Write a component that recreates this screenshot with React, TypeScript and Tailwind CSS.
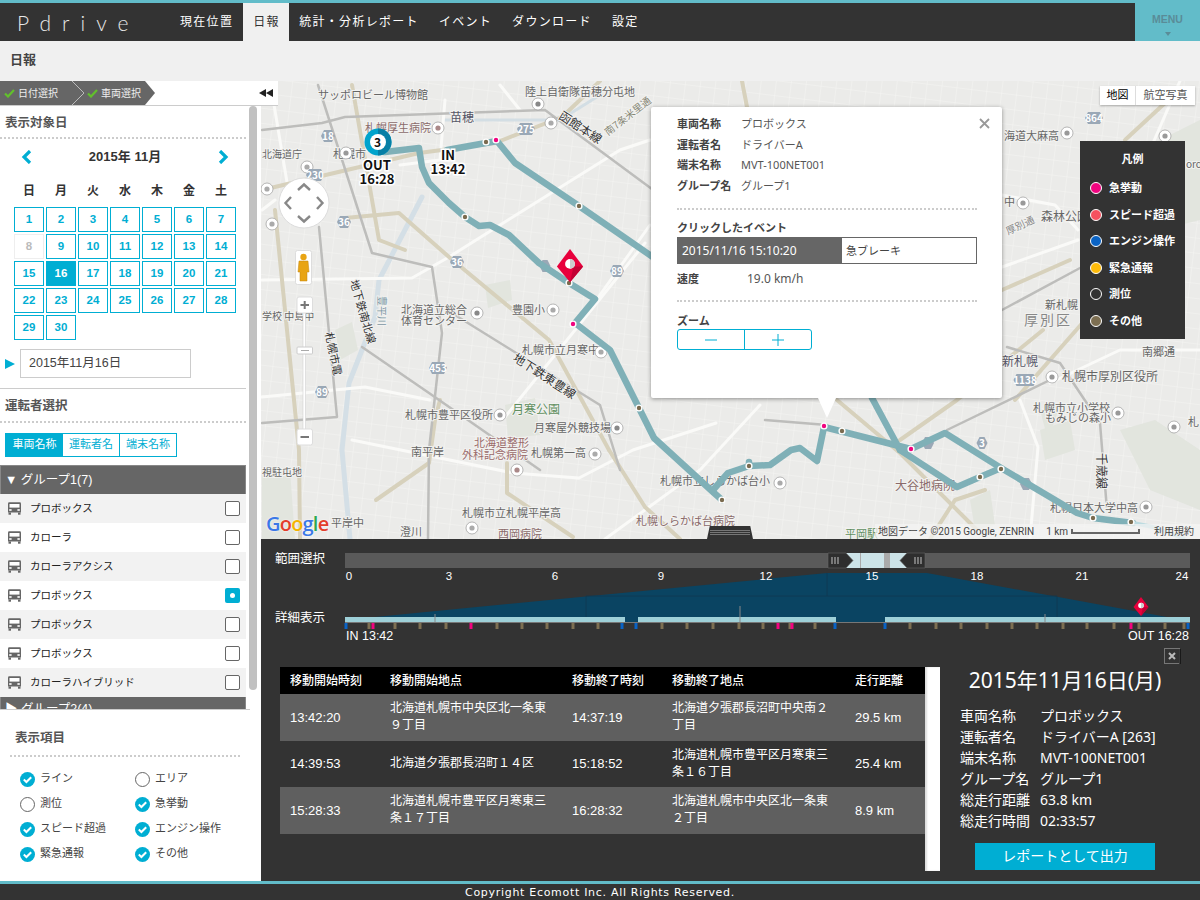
import React from "react";

const days = Array.from({ length: 30 }, (_, i) => i + 1);
const vehicles = ["プロボックス", "カローラ", "カローラアクシス", "プロボックス", "プロボックス", "プロボックス", "カローラハイブリッド"];

const Bus = () => (
  <svg width="15" height="13" viewBox="0 0 15 13" className="shrink-0">
    <path d="M1 1.5 Q1 .3 2.3 .3 H12.7 Q14 .3 14 1.5 V10.5 H1 Z" fill="#666" />
    <rect x="2.5" y="2" width="10" height="3.6" fill="#fff" />
    <rect x="2.2" y="7.2" width="2.4" height="1.6" fill="#fff" />
    <rect x="10.4" y="7.2" width="2.4" height="1.6" fill="#fff" />
    <rect x="1.5" y="10.5" width="2.5" height="2.2" fill="#666" />
    <rect x="11" y="10.5" width="2.5" height="2.2" fill="#666" />
  </svg>
);

const Tick = () => (
  <svg width="11" height="9" viewBox="0 0 11 9" className="shrink-0">
    <path d="M1 4.5 L4 7.5 L10 1" stroke="#62c02c" strokeWidth="2.2" fill="none" />
  </svg>
);

const Check = ({ on, label }: { on: boolean; label: string }) => (
  <div className="flex items-center gap-[5px] h-[25px]">
    {on ? (
      <svg width="15" height="15" viewBox="0 0 15 15" className="shrink-0">
        <circle cx="7.5" cy="7.5" r="7.5" fill="#00aed3" />
        <path d="M3.8 7.6 L6.4 10 L11.2 5.2" stroke="#fff" strokeWidth="2" fill="none" />
      </svg>
    ) : (
      <span className="w-[15px] h-[15px] rounded-full border border-[#666] bg-white shrink-0" />
    )}
    <span className="text-[11px] text-[#444] -mt-[2px]">{label}</span>
  </div>
);

const L = ({ x, y, t, c = "#666", s = 11, r, h = true, ls }: { x: number; y: number; t: string; c?: string; s?: number; r?: number; h?: boolean; ls?: number }) => (
  <text
    x={x}
    y={y}
    fontSize={s}
    fill={c}
    letterSpacing={ls}
    stroke={h ? "#f2f2f0" : "none"}
    strokeWidth={h ? 2 : 0}
    paintOrder="stroke"
    transform={r ? `rotate(${r} ${x} ${y})` : undefined}
  >
    {t}
  </text>
);

const Shield = ({ x, y, t, w = 18 }: { x: number; y: number; t: string; w?: number }) => (
  <g>
    <path d={`M${x - w / 2} ${y - 6} H${x + w / 2} L${x + w / 2 + 3} ${y} L${x + w / 2} ${y + 6} H${x - w / 2} L${x - w / 2 - 3} ${y} Z`} fill="#9aa8b6" />
    <text x={x} y={y + 3.5} fontSize="10" fontWeight="700" fill="#fff" textAnchor="middle">{t}</text>
  </g>
);

const Poi = ({ x, y, c = "#777" }: { x: number; y: number; c?: string }) => (
  <g>
    <circle cx={x} cy={y} r="6" fill="#fff" stroke="#999" strokeWidth=".7" />
    <circle cx={x} cy={y} r="2.6" fill={c} />
  </g>
);

const Dot = ({ x, y, pink }: { x: number; y: number; pink?: boolean }) => (
  <g>
    <circle cx={x} cy={y} r="3.6" fill="#fff" />
    <circle cx={x} cy={y} r="2.2" fill={pink ? "#f0047f" : "#7a6b4f"} />
  </g>
);

const Outlined = ({ x, y, t }: { x: number; y: number; t: string }) => (
  <text x={x} y={y} fontSize="13" fontWeight="700" fill="#111" stroke="#fff" strokeWidth="3" paintOrder="stroke" textAnchor="middle">{t}</text>
);

const Pin = ({ x, y, k = 1 }: { x: number; y: number; k?: number }) => (
  <g transform={`translate(${x} ${y}) scale(${k})`}>
    <path d="M0 0 L7.5 10 L0 19 L-7.5 10 Z" fill="#e8003c" />
    <path d="M2 10 L7.5 10 L0 19 Z" fill="#c20033" />
    <circle cx="0" cy="8.500" r="2.800" fill="#fff" />
    <path d="M0 5.700 A2.800 2.800 0 0 1 0 11.300 Z" fill="#ccc" />
  </g>
);

const MapArt = () => (
  <svg viewBox="261 81 939 458" width="939" height="458" className="block font-['Noto_Sans_CJK_JP',sans-serif]">
    <defs>
      <pattern id="streets" width="15" height="15" patternUnits="userSpaceOnUse" patternTransform="rotate(7)">
        <path d="M0 0 H15 M0 0 V15" stroke="#f7f7f5" strokeWidth=".9" fill="none" />
      </pattern>
    </defs>
    <rect x="261" y="81" width="939" height="458" fill="#ebebe9" />
    <rect x="261" y="81" width="939" height="458" fill="url(#streets)" />
    <g fill="#e2e5de">
      <path d="M335 330 L352 322 L358 350 L340 360 Z" />
      <path d="M262 470 L290 470 L295 539 L262 539 Z" />
      <path d="M1040 430 L1070 420 L1075 450 L1045 460 Z" />
      <path d="M1040 410 L1060 405 L1048 440 Z" />
      <path d="M505 405 L535 398 L540 435 L508 438 Z" />
      <path d="M485 285 L510 280 L512 300 L488 308 Z" />
      <path d="M1120 430 L1155 420 L1200 450 L1200 510 L1150 490 Z" />
      <path d="M970 500 L990 490 L995 525 L975 530 Z" />
      <path d="M1100 170 L1200 120 L1200 220 L1120 240 Z" />
    </g>
    <g fill="none" strokeLinecap="round" strokeLinejoin="round">
      <path d="M422 197 L379 280 L375 317 L349 383 L342 450 L350 539" stroke="#d4dfe6" strokeWidth="5" />
      <path d="M445 120 L560 120 L600 95" stroke="#d3dee4" strokeWidth="3" />
      <g stroke="#fafaf8" strokeWidth="3">
        <path d="M262 280 L412 278 L449 257" />
        <path d="M505 417 L645 243" />
        <path d="M582 320 L650 225" />
        <path d="M262 397 L365 387 L430 400" />
        <path d="M352 440 L513 473 L579 478 L633 450 L716 423" />
        <path d="M449 257 L620 150 L650 140" />
        <path d="M270 81 L290 200" />
        <path d="M1020 400 L1038 447 L1030 539" />
        <path d="M1050 383 L1120 350 L1200 350" />
        <path d="M1002 267 L1078 240" />
        <path d="M1002 195 L1055 205 L1078 230" />
        <path d="M1180 81 L1150 150" />
        <path d="M500 85 L520 110" />
        <path d="M400 165 L440 160 L445 100" />
        <path d="M262 210 L275 200" />
        <path d="M605 539 L700 470 L760 405" />
      </g>
      <g stroke="#d7d1bc" strokeWidth="4">
        <path d="M352 85 L379 240 L405 250" />
        <path d="M345 218 L399 213 L449 257 L549 340 L609 450" />
        <path d="M262 190 L419 153 L495 143 L562 117 L600 81" />
        <path d="M275 210 L299 450 L300 539" />
        <path d="M376 500 L429 463 L435 420 L440 400" />
        <path d="M507 463 L507 493 L573 537" />
        <path d="M609 450 L645 507 L680 539" />
        <path d="M837 400 L900 453 L977 530" />
        <path d="M900 440 L957 400 L1043 330" />
        <path d="M742 81 L747 107" />
        <path d="M1165 103 L1125 140" />
        <path d="M1002 290 L1070 260" />
        <path d="M1015 400 L1085 320" />
        <path d="M930 539 L955 500 L985 490" />
      </g>
      <g stroke="#bdbdbb" strokeWidth="2.5">
        <path d="M262 130 L322 123 L345 117 L545 110 L660 195 L700 215" />
        <path d="M318 85 L372 253 L432 267 L442 333 L429 450 L428 539" />
        <path d="M319 227 L337 417 L262 423" />
        <path d="M362 347 L429 393 L540 470" />
        <path d="M947 430 L1050 380" />
        <path d="M1007 347 L1060 363 L1100 423 L1107 510" />
        <path d="M1002 310 L1080 268" />
        <path d="M455 315 L600 405 L620 470" />
        <path d="M765 420 L827 425" />
      </g>
    </g>

    <L x={318} y={99} t="サッポロビール博物館" />
    <L x={525} y={96} t="陸上自衛隊苗穂分屯地" />
    <L x={450} y={122} t="苗穂" s={12} c="#556" />
    <L x={365} y={132} t="札幌厚生病院" c="#8a6a6a" />
    <L x={558} y={118} t="函館本線" c="#333" s={12} r={33} />
    <L x={608} y={136} t="南7条米里通" c="#887" s={10} r={-38} />
    <L x={262} y={158} t="北海道庁" s={10} />
    <L x={333} y={158} t="札幌市" />
    <L x={262} y={320} t="学校 中島中" s={10} />
    <L x={350} y={281} t="地下鉄南北線" c="#333" s={11} r={74} />
    <L x={325} y={333} t="札幌市電" c="#333" s={11} r={78} />
    <L x={378} y={296} t="豊平川" c="#7c96a4" s={10} r={90} />
    <L x={401} y={314} t="北海道立総合" />
    <L x={401} y={325} t="体育センター" />
    <L x={512} y={314} t="豊園小" />
    <L x={522} y={354} t="札幌市立月寒中" />
    <L x={512} y={360} t="地下鉄東豊線" c="#333" s={12} r={33} />
    <L x={512} y={414} t="月寒公園" c="#5f8f5f" s={12} />
    <L x={405} y={419} t="札幌市豊平区役所" />
    <L x={534} y={432} t="月寒屋外競技場" />
    <L x={474} y={447} t="北海道整形" c="#9a6a6a" />
    <L x={462} y={459} t="外科記念病院" c="#9a6a6a" />
    <L x={531} y={457} t="札幌第一高" />
    <L x={411} y={456} t="南平岸" />
    <L x={660} y={485} t="札幌市立しらかば台小" />
    <L x={462} y={517} t="札幌市立札幌平岸高" />
    <L x={636} y={525} t="札幌しらかば台病院" c="#8a6a6a" />
    <L x={331} y={527} t="平岸中" />
    <L x={400} y={536} t="澄川" />
    <L x={498} y={538} t="西岡病院" c="#8a6a6a" />
    <L x={262} y={476} t="視駐屯地" s={10} />
    <L x={895} y={490} t="大谷地病院" c="#8a6a6a" s={12} />
    <L x={1050} y={512} t="札幌日本大学中高" />
    <L x={1002} y={366} t="新札幌" c="#556" s={12} />
    <L x={1062} y={381} t="札幌市厚別区役所" s={12} />
    <L x={1033} y={412} t="札幌市立小学校" />
    <L x={1045} y={422} t="もみじの森小" />
    <L x={1142} y={356} t="南郷通" />
    <L x={1097} y={453} t="千歳線" c="#333" s={12} r={90} />
    <L x={1024} y={325} t="厚別区" c="#888" s={14} ls={2} />
    <L x={1045} y={309} t="新札幌" />
    <L x={1041} y={221} t="森林公園" s={12} />
    <L x={1008} y={235} t="厚別通" s={10} c="#888" r={-25} />
    <L x={1004} y={140} t="海道大麻高" />
    <L x={1004} y={206} t="中" />
    <L x={1186} y={168} t="oro" s={10} />
    <L x={1188} y={426} t="札" />
    <L x={845} y={538} t="平岡駅" c="#5f8f5f" />
    <Poi x={1067} y={133} c="#999" />
    <Poi x={1165} y={136} c="#999" />
    <Poi x={1023} y={203} c="#999" />
    <Poi x={1052} y={377} c="#999" />
    <Poi x={1118} y={413} c="#999" />
    <Poi x={1174} y={427} c="#999" />
    <Poi x={1146} y={507} c="#999" />
    <Poi x={346} y={153} c="#999" />
    <Poi x={477} y={313} c="#888" />
    <Poi x={553} y={310} c="#aaa" />
    <Poi x={601} y={352} c="#aaa" />
    <Poi x={500} y={415} c="#999" />
    <Poi x={617} y={428} c="#888" />
    <Poi x={595} y={454} c="#aaa" />
    <Poi x={517} y={470} c="#a88" />
    <Poi x={780} y={483} c="#aaa" />
    <Poi x={472} y={528} c="#aaa" />
    <Poi x={551} y={123} c="#aaa" />
    <Poi x={438} y={128} c="#a88" />
    <Poi x={538} y={104} c="#888" />
    <Poi x={307} y={167} c="#aaa" />
    <Poi x={267} y={189} c="#aaa" />
    <Poi x={272} y={224} c="#aaa" />
    <Shield x={328} y={136} t="18" w={8} />
    <Shield x={315} y={175} t="230" w={12} />
    <Shield x={344} y={222} t="36" w={8} />
    <Shield x={457} y={262} t="36" w={8} />
    <Shield x={526} y={129} t="275" w={12} />
    <Shield x={617} y={271} t="89" w={8} />
    <Shield x={438} y={368} t="453" w={12} />
    <Shield x={322} y={392} t="89" w={8} />
    <Shield x={1094} y={118} t="864" w={12} />
    <Shield x={1025} y={380} t="1138" w={17} />
    <Shield x={982} y={443} t="3" w={5} />
    <Shield x={928} y={443} t="" w={6} />
    <Shield x={1026} y={484} t="" w={6} />
    <Shield x={545} y={266} t="" w={5} />

    <g fill="none" stroke="#7fb0b7" strokeWidth="6.500" strokeLinejoin="round" strokeLinecap="round">
      <path d="M385 152 L419 148 L422 167 L429 183 L449 203 L465 217 L479 226 L490 225 L509 235 L539 263 L569 283 L595 299 L575 323 L610 350 L639 408 L654 438 L713 492 L722 500" />
      <path d="M447 150 L497 141 L515 163 L579 206 L660 262" />
      <path d="M713 490 L728 473 L749 466 L749 462 M749 466 L770 465 L791 450 L800 448 L817 461 L824 427 L911 449 L945 433 L1001 468 L1077 513 L1093 518 L1133 523" />
      <path d="M872 398 L900 450 L957 487 L980 477 L1001 468" />
      <path d="M911 449 L900 450" />
    </g>
    <path d="M1133 523 L1153 527 L1185 539" fill="none" stroke="#bcdbe0" strokeWidth="4" />
    <Dot x={486} y={142} />
    <Dot x={496} y={140} pink />
    <Dot x={579} y={206} />
    <Dot x={465} y={217} />
    <Dot x={569} y={283} />
    <Dot x={573} y={324} pink />
    <Dot x={639} y={408} />
    <Dot x={722} y={500} />
    <Dot x={749} y={466} />
    <Dot x={824} y={426} pink />
    <Dot x={842} y={431} />
    <Dot x={911} y={449} pink />
    <Dot x={980} y={477} />
    <Dot x={1001} y={469} />
    <Dot x={1093} y={518} />
    <Dot x={1131} y={522} />
    <Pin x={570} y={249} k={1.750} />

    <circle cx="378" cy="142" r="13.5" fill="#00a3cc" />
    <path d="M378 128.5 A13.5 13.5 0 0 1 378 155.5 Z" fill="#067fa6" />
    <circle cx="378" cy="142" r="8" fill="#fff" />
    <text x="377.500" y="146.500" fontSize="12" fontWeight="700" fill="#111" textAnchor="middle">3</text>
    <Outlined x={377} y={170} t="OUT" />
    <Outlined x={377} y={184} t="16:28" />
    <Outlined x={448} y={160} t="IN" />
    <Outlined x={448} y={174} t="13:42" />

    <circle cx="304" cy="203" r="25" fill="#fff" stroke="#ddd" />
    <g fill="none" stroke="#888" strokeWidth="2.4">
      <path d="M298 190 L304 184.500 L310 190" />
      <path d="M298 216 L304 221.500 L310 216" />
      <path d="M291 197 L285.500 203 L291 209" />
      <path d="M317 197 L322.500 203 L317 209" />
    </g>
    <rect x="295.500" y="250.500" width="16" height="34" rx="2" fill="#fff" stroke="#ddd" />
    <circle cx="303.500" cy="257" r="3.200" fill="#e8a414" />
    <path d="M299 261 H308 L309 272 H307 V281 H300 V272 H298 Z" fill="#e8a414" stroke="#c08610" strokeWidth=".5" />
    <rect x="303" y="312" width="2.500" height="118" fill="#fff" stroke="#ccc" strokeWidth=".5" />
    <rect x="297" y="297" width="15.500" height="16" rx="2" fill="#fff" stroke="#ddd" />
    <path d="M300.500 305 H309 M304.700 301 V309" stroke="#777" strokeWidth="2" />
    <rect x="297" y="347" width="15.500" height="7" rx="1" fill="#fff" stroke="#ccc" />
    <path d="M301 350.500 H309" stroke="#aaa" />
    <rect x="297" y="429" width="15.500" height="16" rx="2" fill="#fff" stroke="#ddd" />
    <path d="M300.500 437 H309" stroke="#777" strokeWidth="2" />
  </svg>
);

const brown = [369, 395, 420, 446, 497, 522, 547, 573, 598, 662, 687, 713, 739, 763, 790, 815, 910, 936, 961, 987, 1012, 1037, 1063, 1087, 1114, 1139, 1165, 1184];
const pink = [373, 471, 778, 792, 1131];
const blue = [346, 622, 636, 835, 885, 1188];
const hours: [number, string][] = [[349, "0"], [449, "3"], [555, "6"], [661, "9"], [766, "12"], [872, "15"], [977, "18"], [1082, "21"], [1182, "24"]];

const Timeline = () => (
  <svg viewBox="261 539 939 128" width="939" height="128" className="block font-['Liberation_Sans','Noto_Sans_CJK_JP',sans-serif]">
    <text x="275" y="563" fontSize="12.500" fill="#fff">範囲選択</text>
    <text x="275" y="622" fontSize="12.500" fill="#fff">詳細表示</text>
    <rect x="345" y="553" width="845" height="15" fill="#5a5a5a" />
    <path d="M375 617 L827 573 H927 L1167 617 V622 H375 Z" fill="#0a4462" />
    <rect x="846" y="553" width="72" height="15" fill="#cce3e8" />
    <rect x="860" y="553" width="1" height="15" fill="#aaa" />
    <rect x="884" y="553" width="6" height="15" fill="#aaa" />
    <path d="M828 553 H846 L853 560.500 L846 568 H828 Z" fill="#2e2e2e" stroke="#666" strokeWidth=".6" />
    <path d="M832 557 V564 M835 557 V564 M838 557 V564" stroke="#999" strokeWidth="1.400" />
    <path d="M925 553 H907 L900 560.500 L907 568 H925 Z" fill="#2e2e2e" stroke="#666" strokeWidth=".6" />
    <path d="M915 557 V564 M918 557 V564 M921 557 V564" stroke="#999" strokeWidth="1.400" />
    {hours.map(([x, t]) => (
      <text key={t} x={x} y={580} fontSize="11.500" fill="#fff" textAnchor="middle">{t}</text>
    ))}
    <path d="M586 596 H1057 M827 573 V596 M586 596 V617 M1057 596 V617" stroke="#0f3850" fill="none" strokeWidth=".8" />
    <rect x="345" y="617" width="280" height="5" fill="#9ed0d8" />
    <rect x="638" y="617" width="198" height="5" fill="#9ed0d8" />
    <rect x="885" y="617" width="305" height="5" fill="#9ed0d8" />
    <rect x="345" y="622" width="845" height="1" fill="#777" />
    <path d="M435 614 V622 M740 606 V622 M1045 614 V622" stroke="#888" />
    {brown.map((x) => <rect key={x} x={x - 1.5} y={623} width="3" height="6" fill="#7d6f52" />)}
    {pink.map((x) => <rect key={x} x={x - 1.5} y={623} width="3" height="6" fill="#f0047f" />)}
    {blue.map((x) => <rect key={x} x={x - 1.5} y={623} width="3" height="6" fill="#0a63c4" />)}
    <Pin x={1141} y={597} />
    <text x="346" y="640" fontSize="12.500" fill="#fff">IN 13:42</text>
    <text x="1189" y="640" fontSize="12.500" fill="#fff" textAnchor="end">OUT 16:28</text>
    <rect x="1164.500" y="648.500" width="15" height="15" fill="#333" stroke="#777" />
    <path d="M1180 649 V664" stroke="#000" />
    <path d="M1169 653 L1175 659 M1175 653 L1169 659" stroke="#bbb" strokeWidth="2" />
  </svg>
);

const rows = [
  ["13:42:20", <>北海道札幌市中央区北一条東<br />９丁目</>, "14:37:19", <>北海道夕張郡長沼町中央南２<br />丁目</>, "29.5 km"],
  ["14:39:53", <>北海道夕張郡長沼町１４区</>, "15:18:52", <>北海道札幌市豊平区月寒東三<br />条１６丁目</>, "25.4 km"],
  ["15:28:33", <>北海道札幌市豊平区月寒東三<br />条１７丁目</>, "16:28:32", <>北海道札幌市中央区北一条東<br />２丁目</>, "8.9 km"],
];

const summary = [
  ["車両名称", "プロボックス"],
  ["運転者名", "ドライバーA [263]"],
  ["端末名称", "MVT-100NET001"],
  ["グループ名", "グループ1"],
  ["総走行距離", "63.8 km"],
  ["総走行時間", "02:33:57"],
];

const legend: [string, string][] = [
  ["bg-[#f0047f]", "急挙動"],
  ["bg-[#f5515f]", "スピード超過"],
  ["bg-[#0a63c4]", "エンジン操作"],
  ["bg-[#fdbb0a]", "緊急通報"],
  ["bg-[#333333]", "測位"],
  ["bg-[#7d6f52]", "その他"],
];

const popupInfo = [
  ["車両名称", "プロボックス"],
  ["運転者名", "ドライバーA"],
  ["端末名称", "MVT-100NET001"],
  ["グループ名", "グループ1"],
];

export default function App() {
  return (
    <div className="w-[1200px] h-[900px] flex flex-col overflow-hidden bg-[#333] font-['Liberation_Sans','Noto_Sans_CJK_JP',sans-serif]">
      <header className="h-[41px] shrink-0 border-t-[3px] border-[#62bcc9] bg-[#333] flex">
        <div className="w-[170px] pl-[17px] text-[#e8e8e8] text-[21px] font-light tracking-[11px] leading-[40px] font-['Lato',sans-serif]">Pdrive</div>
        <nav className="flex flex-1 text-[12px] tracking-[1.300px] text-white leading-[38px] whitespace-nowrap">
          <span className="px-[10px]">現在位置</span>
          <span className="pl-[10px] bg-[#f0f0f0] text-[#333] w-[46px]">日報</span>
          <span className="px-[10px]">統計・分析レポート</span>
          <span className="px-[10px]">イベント</span>
          <span className="px-[10px]">ダウンロード</span>
          <span className="px-[10px]">設定</span>
        </nav>
        <div className="w-[65px] bg-[#62bcc9] flex flex-col items-center pt-[10px] text-[#5a8c98]">
          <span className="text-[10.500px] font-bold leading-[12px]">MENU</span>
          <span className="mt-[7px] w-0 h-0 border-x-[3.500px] border-x-transparent border-t-[4px] border-t-[#5a8c98]" />
        </div>
      </header>
      <div className="h-[40px] shrink-0 bg-[#f0f0f0] pl-[10px] text-[13px] font-bold text-[#444] leading-[37px]">日報</div>

      <main className="h-[800px] shrink-0 flex">
        <aside className="w-[261px] shrink-0 bg-white flex flex-col relative">
          <div className="absolute left-0 top-0 w-[278px] h-[25px] bg-white border-b border-[#ccc] z-10 flex items-center">
            <div className="flex h-[24px] items-center text-[#eee] text-[10px]">
              <div className="h-[24px] w-[72px] bg-[#666] flex items-center pl-[4px] gap-[3px]">
                <Tick />日付選択
              </div>
              <div className="h-[24px] w-[83px] bg-[#666] flex items-center pl-[15px] gap-[3px] relative [clip-path:polygon(0_0,calc(100%-10px)_0,100%_50%,calc(100%-10px)_100%,0_100%)]">
                <Tick />車両選択
                <svg width="12" height="24" className="absolute left-0 top-0"><path d="M0 0 L12 12 L0 24" fill="none" stroke="#bbb" /></svg>
              </div>
            </div>
            <svg width="14" height="8" viewBox="0 0 14 8" className="ml-auto mr-[5px]"><path d="M7 0 V8 L0 4 Z M14 0 V8 L7 4 Z" fill="#222" /></svg>
          </div>

          <div className="h-[603px] shrink-0 mt-[25px] flex overflow-hidden">
            <div className="w-[246px] shrink-0 overflow-hidden">
              <h2 className="h-[33px] pl-[5px] pt-[9px] text-[12.500px] font-bold text-[#555] leading-[16px] border-b-2 border-dotted border-[#ccc]">表示対象日</h2>
              <div className="flex items-center justify-between pl-[21px] pr-[17px] h-[36px]">
                <svg width="12" height="14" viewBox="0 0 12 14"><path d="M9 1 L3 7 L9 13" fill="none" stroke="#00aed3" strokeWidth="3.200" /></svg>
                <span className="text-[13px] font-bold text-[#333]">2015年 11月</span>
                <svg width="12" height="14" viewBox="0 0 12 14"><path d="M3 1 L9 7 L3 13" fill="none" stroke="#00aed3" strokeWidth="3.200" /></svg>
              </div>
              <div className="grid grid-cols-[repeat(7,30px)] gap-x-[2px] pl-[14px] h-[32px] items-center text-center text-[12px] font-bold text-[#333]">
                {["日", "月", "火", "水", "木", "金", "土"].map((d) => <span key={d}>{d}</span>)}
              </div>
              <div className="grid grid-cols-[repeat(7,30px)] auto-rows-[25px] gap-[2px] pl-[14px]">
                {days.map((d) => (
                  <div
                    key={d}
                    className={
                      d === 8
                        ? "border border-[#eee] text-[#bbb] flex items-center justify-center text-[11.500px] font-bold"
                        : d === 16
                        ? "bg-[#00aed3] text-white flex items-center justify-center text-[11.500px] font-bold"
                        : "border border-[#00aed3] text-[#00aed3] flex items-center justify-center text-[11.500px] font-bold"
                    }
                  >
                    {d}
                  </div>
                ))}
              </div>
              <div className="flex items-center h-[29px] mt-[9px] pl-[5px]">
                <span className="w-0 h-0 border-y-[5px] border-y-transparent border-l-[10px] border-l-[#00aed3]" />
                <div className="ml-[5px] w-[171px] h-[29px] border border-[#ccc] pl-[8px] text-[12.500px] text-[#444] leading-[26px]">2015年11月16日</div>
              </div>
              <div className="mt-[10px] border-t border-[#ccc]" />
              <h2 className="h-[34px] pl-[5px] pt-[9px] text-[12.500px] font-bold text-[#555] leading-[16px] border-b-2 border-dotted border-[#ccc]">運転者選択</h2>
              <div className="flex mt-[10px] ml-[5px] h-[24px] w-[172px] border border-[#00aed3] text-[11px] text-[#00aed3] leading-[21px] text-center">
                <span className="w-[57px] bg-[#00aed3] text-white">車両名称</span>
                <span className="w-[57px] border-r border-[#00aed3]">運転者名</span>
                <span className="flex-1">端末名称</span>
              </div>
              <div className="mt-[8px] h-[29px] bg-[#666] text-white text-[12.500px] leading-[28px] pl-[4px] border-x border-[#888] border-t">▼ グループ1(7)</div>
              {vehicles.map((v, i) => (
                <div key={i} className={i % 2 === 0 ? "h-[29px] bg-[#f2f2f2] flex items-center pl-[7px] pr-[6px]" : "h-[29px] bg-white flex items-center pl-[7px] pr-[6px]"}>
                  <Bus />
                  <span className="ml-[8px] text-[10.500px] text-[#222] flex-1">{v}</span>
                  {i === 3 ? (
                    <span className="w-[15px] h-[15px] rounded-[2px] bg-[#00aed3] flex items-center justify-center"><span className="w-[5px] h-[5px] rounded-full bg-white" /></span>
                  ) : (
                    <span className="w-[15px] h-[15px] rounded-[2px] border border-[#666] bg-white" />
                  )}
                </div>
              ))}
              <div className="h-[29px] bg-[#666] text-white text-[12.500px] leading-[24px] pl-[4px] border-x border-[#888]">▶ グループ2(4)</div>
            </div>
            <div className="w-[14px] shrink-0 bg-white pl-[3px]">
              <div className="w-[8px] h-[584px] bg-[#c1c1c1] rounded-b-[4px] rounded-t-[4px]" />
            </div>
          </div>

          <div className="flex-1 border-t border-[#ccc] w-[250px]">
            <h2 className="mt-[20px] ml-[15px] text-[12.500px] font-bold text-[#555] leading-[16px]">表示項目</h2>
            <div className="mx-[10px] mt-[9px] border-b-2 border-dotted border-[#ccc]" />
            <div className="grid grid-cols-[115px_100px] pl-[20px] pt-[10px]">
              <Check on label="ライン" />
              <Check on={false} label="エリア" />
              <Check on={false} label="測位" />
              <Check on label="急挙動" />
              <Check on label="スピード超過" />
              <Check on label="エンジン操作" />
              <Check on label="緊急通報" />
              <Check on label="その他" />
            </div>
          </div>
        </aside>

        <section className="flex-1 flex flex-col min-w-0">
          <div className="relative h-[458px] shrink-0 overflow-hidden">
            <MapArt />
            <div className="absolute left-[5px] bottom-[3px] text-[20px] font-semibold leading-[24px] font-['Open_Sans',sans-serif] tracking-[-0.800px] [text-shadow:0_0_2px_#fff]">
              <span className="text-[#3b78e7]">G</span><span className="text-[#e33e2b]">o</span><span className="text-[#f4b400]">o</span><span className="text-[#3b78e7]">g</span><span className="text-[#2fa84f]">l</span><span className="text-[#e33e2b]">e</span>
            </div>
            <div className="absolute right-0 bottom-0 h-[15px] w-[325px] bg-[#f5f5f3]/70 flex items-center pl-[3px] text-[10px] text-[#444] font-['Roboto','Noto_Sans_CJK_JP',sans-serif]">
              <span>地図データ ©2015 Google, ZENRIN</span>
              <span className="ml-[12px]">1 km</span>
              <span className="ml-[3px] w-[69px] h-[5px] border-x-2 border-b-2 border-[#666]" />
              <span className="ml-[14px]">利用規約</span>
            </div>
            <div className="absolute left-[446px] bottom-0 w-[46px] h-[13px] bg-[#333] flex flex-col justify-center gap-[1px] px-[3px] [clip-path:polygon(6%_0,94%_0,100%_100%,0_100%)]">
              <span className="h-[1px] bg-[#777]" />
              <span className="h-[1px] bg-[#777]" />
              <span className="h-[1px] bg-[#777]" />
            </div>
            <div className="absolute left-[839px] top-[5px] w-[95px] h-[19px] bg-white shadow-[0_1px_2px_rgba(0,0,0,0.3)] flex text-[11px] leading-[19px] text-center text-[#333]">
              <span className="w-[36px] border-r border-[#ddd] text-black">地図</span>
              <span className="flex-1 text-[#555]">航空写真</span>
            </div>
            <div className="absolute left-[819px] top-[60px] w-[105px] h-[198px] bg-[#333] text-white text-[11px] font-bold">
              <div className="text-center text-[11px] pt-[10px] h-[34px]">凡例</div>
              <div className="flex flex-col">
                {legend.map(([c, t]) => (
                  <div key={t} className="h-[26.500px] flex items-center pl-[10px] gap-[7px]">
                    <span className={`w-[12px] h-[12px] rounded-full border border-white shrink-0 ${c}`} />
                    <span className="whitespace-nowrap">{t}</span>
                  </div>
                ))}
              </div>
            </div>
            <div className="absolute left-[390px] top-[26px] w-[351px] h-[291px] bg-white rounded-[2px] shadow-[0_1px_4px_rgba(0,0,0,0.4)] pl-[26px] pr-[25px] pt-[7px] text-[11px] text-[#555] font-['Noto_Sans','Noto_Sans_CJK_JP',sans-serif]">
              <svg width="11" height="11" viewBox="0 0 11 11" className="absolute right-[12px] top-[11px]"><path d="M1 1 L10 10 M10 1 L1 10" stroke="#999" strokeWidth="1.800" /></svg>
              <div className="h-[84px] flex flex-col">
                {popupInfo.map(([a, b]) => (
                  <div key={a} className="h-[20.500px] flex items-center">
                    <span className="w-[64px] font-bold text-[#444] whitespace-nowrap">{a}</span>
                    <span>{b}</span>
                  </div>
                ))}
              </div>
              <div className="mt-[10px] border-t-2 border-dotted border-[#ccc]" />
              <div className="mt-[11px] font-bold text-[#444] leading-[14px]">クリックしたイベント</div>
              <div className="mt-[2px] flex h-[27px] border border-[#666] text-[12px] leading-[25px]">
                <span className="w-[164px] bg-[#666] text-white pl-[4px]">2015/11/16 15:10:20</span>
                <span className="pl-[4px] text-[#444] text-[11px]">急ブレーキ</span>
              </div>
              <div className="mt-[7px] flex h-[16px] items-center">
                <span className="w-[70px] font-bold text-[#444]">速度</span>
                <span className="text-[12px]">19.0 km/h</span>
              </div>
              <div className="mt-[13px] border-t-2 border-dotted border-[#ccc]" />
              <div className="mt-[12px] font-bold text-[#444] leading-[14px]">ズーム</div>
              <div className="mt-[1px] flex w-[135px] h-[21px] border border-[#00aed3] rounded-[3px]">
                <span className="w-[67px] border-r border-[#00aed3] flex items-center justify-center">
                  <svg width="12" height="12"><path d="M0 6 H12" stroke="#00aed3" /></svg>
                </span>
                <span className="flex-1 flex items-center justify-center">
                  <svg width="12" height="12"><path d="M0 6 H12 M6 0 V12" stroke="#00aed3" /></svg>
                </span>
              </div>
              <span className="absolute left-[167px] -bottom-[20px] w-0 h-0 border-x-[9px] border-x-transparent border-t-[20px] border-t-white" />
            </div>
          </div>

          <div className="flex-1 bg-[#333] flex flex-col min-h-0">
            <Timeline />
            <div className="flex pl-[19px]">
              <div className="w-[645px] shrink-0 text-white text-[12px]">
                <div className="h-[27px] bg-black flex items-center font-medium">
                  <span className="w-[100px] pl-[10px]">移動開始時刻</span>
                  <span className="w-[182px] pl-[10px]">移動開始地点</span>
                  <span className="w-[100px] pl-[10px]">移動終了時刻</span>
                  <span className="w-[183px] pl-[10px]">移動終了地点</span>
                  <span className="pl-[10px]">走行距離</span>
                </div>
                {rows.map((r, i) => (
                  <div key={i} className={i % 2 === 0 ? "h-[46.500px] bg-[#5f5f5f] flex items-center leading-[17px]" : "h-[46.500px] flex items-center leading-[17px]"}>
                    <span className="w-[100px] pl-[10px] text-[13px]">{r[0]}</span>
                    <span className="w-[182px] pl-[10px]">{r[1]}</span>
                    <span className="w-[100px] pl-[10px] text-[13px]">{r[2]}</span>
                    <span className="w-[183px] pl-[10px]">{r[3]}</span>
                    <span className="pl-[10px] text-[13px]">{r[4]}</span>
                  </div>
                ))}
              </div>
              <div className="w-[15px] h-[204px] shrink-0 bg-white shadow-[inset_2px_0_2px_#ddd]" />
              <div className="w-[260px] shrink-0 text-white font-['Noto_Sans','Noto_Sans_CJK_JP',sans-serif]">
                <div className="text-center text-[21px] leading-[27px] pr-[10px] whitespace-nowrap">2015年11月16日(月)</div>
                <div className="mt-[11px] pl-[20px]">
                  {summary.map(([a, b]) => (
                    <div key={a} className="h-[21px] flex items-center text-[14px] whitespace-nowrap">
                      <span className="w-[80px]">{a}</span>
                      <span>{b}</span>
                    </div>
                  ))}
                </div>
                <div className="mt-[12px] ml-[35px] w-[180px] h-[27px] bg-[#00aed3] text-center text-[14px] leading-[26px]">レポートとして出力</div>
              </div>
            </div>
          </div>
        </section>
      </main>

      <footer className="h-[19px] shrink-0 border-t-[3px] border-[#62bcc9] bg-[#333] text-white text-[11px] font-['DejaVu_Sans',sans-serif] text-center leading-[17px] tracking-[0.700px]">
        Copyright Ecomott Inc. All Rights Reserved.
      </footer>
    </div>
  );
}
